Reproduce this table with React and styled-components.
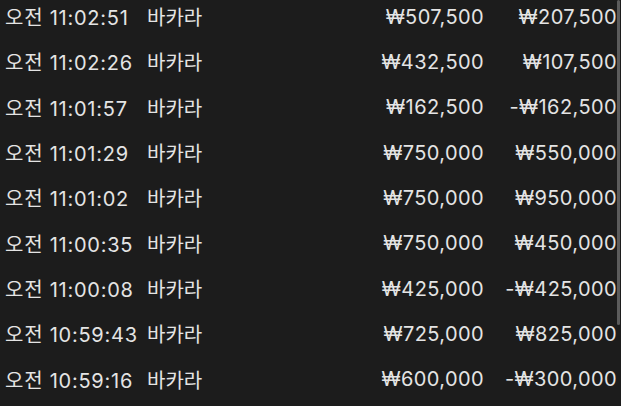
import React from 'react';
import styled, { createGlobalStyle } from 'styled-components';

const GlobalStyle = createGlobalStyle`
    html, body {
        margin: 0;
        padding: 0;
        background: #1c1c1c;
    }
`;

const Screen = styled.div`
    position: relative;
    width: 621px;
    height: 406px;
    overflow: hidden;
    background: #1c1c1c;
    color: #e4e4e4;
    font-family: Inter, "Noto Sans CJK KR", sans-serif;
    font-size: 20px;
`;

const List = styled.div`
    margin-top: -6px;
    padding: 0 4px 0 5px;
`;

const Row = styled.div`
    display: grid;
    grid-template-columns: 142px 1fr 120px 133px;
    align-items: center;
    height: 45.33px;
`;

const Time = styled.span`
    white-space: nowrap;
    letter-spacing: 0.75px;
`;

const Game = styled.span`
    font-family: "Noto Sans CJK KR", sans-serif;
`;

const Amount = styled.span`
    text-align: right;
    white-space: nowrap;
    letter-spacing: 0.4px;
`;

const ScrollThumb = styled.div`
    position: absolute;
    top: 0;
    right: 1px;
    width: 3px;
    height: 325px;
    border-radius: 2px;
    background: #5c5c5c;
`;

const rows = [
    ['오전 11:02:51', '₩507,500', '₩207,500'],
    ['오전 11:02:26', '₩432,500', '₩107,500'],
    ['오전 11:01:57', '₩162,500', '-₩162,500'],
    ['오전 11:01:29', '₩750,000', '₩550,000'],
    ['오전 11:01:02', '₩750,000', '₩950,000'],
    ['오전 11:00:35', '₩750,000', '₩450,000'],
    ['오전 11:00:08', '₩425,000', '-₩425,000'],
    ['오전 10:59:43', '₩725,000', '₩825,000'],
    ['오전 10:59:16', '₩600,000', '-₩300,000'],
];

export default function App() {
    return (
        <Screen>
            <GlobalStyle />
            <List>
                {rows.map(([time, bet, result]) => (
                    <Row key={time}>
                        <Time>{time}</Time>
                        <Game>바카라</Game>
                        <Amount>{bet}</Amount>
                        <Amount>{result}</Amount>
                    </Row>
                ))}
            </List>
            <ScrollThumb />
        </Screen>
    );
}
